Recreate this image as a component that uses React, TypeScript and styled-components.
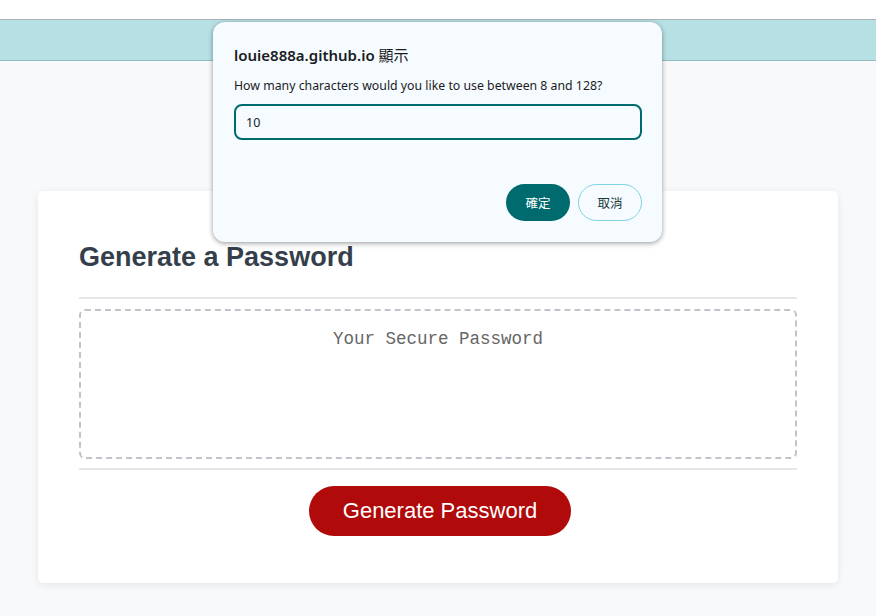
import React from "react";
import styled, { createGlobalStyle } from "styled-components";

const Global = createGlobalStyle`
  html, body { margin: 0; padding: 0; }
  body {
    background: #f8f9fb;
    font-family: "Liberation Sans", Arial, sans-serif;
    width: 876px;
    height: 616px;
    overflow: hidden;
  }
`;

const Page = styled.div`
  position: relative;
  width: 876px;
  height: 616px;
`;

const TopStrip = styled.div`
  height: 19px;
  background: #ffffff;
  border-bottom: 1px solid #a9b3b5;
`;

const Header = styled.header`
  height: 40px;
  background: #b7e0e4;
  border-bottom: 1px solid #97bcbf;
`;

const Main = styled.main`
  padding-top: 130px;
  display: flex;
  justify-content: center;
`;

const Card = styled.section`
  width: 800px;
  box-sizing: border-box;
  height: 392px;
  background: #ffffff;
  border-radius: 5px;
  box-shadow: 0 2px 8px rgba(0, 0, 0, 0.08);
  padding: 50px 41px 0;
  display: flex;
  flex-direction: column;
`;

const Title = styled.h2`
  margin: 0;
  font-family: "Liberation Sans", Arial, sans-serif;
  font-weight: 700;
  font-size: 27px;
  line-height: 33px;
  color: #353f4b;
  padding-bottom: 23px;
  border-bottom: 2px solid #e6e6e6;
`;

const PasswordBox = styled.div`
  margin-top: 10px;
  height: 150px;
  box-sizing: border-box;
  border: 2px dashed #c0c4ca;
  border-radius: 6px;
  display: flex;
  justify-content: center;
  padding-top: 17px;
  font-family: "Liberation Mono", "DejaVu Sans Mono", monospace;
  font-size: 17.5px;
  line-height: 22px;
  color: #666666;
`;

const Rule = styled.div`
  margin-top: 9px;
  height: 2px;
  background: #e6e6e6;
`;

const ButtonRow = styled.div`
  display: flex;
  justify-content: center;
  margin-top: 16px;
  padding-left: 4px;
`;

const GenerateButton = styled.button`
  width: 262px;
  height: 50px;
  border: none;
  border-radius: 25px;
  background: #b00a0a;
  color: #ffffff;
  font-family: "Liberation Sans", Arial, sans-serif;
  font-size: 22px;
  cursor: pointer;
`;

const Dialog = styled.div`
  position: absolute;
  left: 213px;
  top: 22px;
  width: 449px;
  height: 220px;
  box-sizing: border-box;
  background: #f5fbfe;
  border-radius: 12px;
  box-shadow: 0 1px 4px rgba(0, 0, 0, 0.3), 0 2px 6px rgba(0, 0, 0, 0.12);
  padding: 22px 20px 0 21px;
  display: flex;
  flex-direction: column;
  font-family: "Noto Sans", "Noto Sans CJK TC", sans-serif;
`;

const DialogTitle = styled.div`
  font-size: 15px;
  font-weight: 600;
  color: #1b1b1f;
  line-height: 22px;
`;

const Cjk = styled.span`
  font-family: "Noto Sans CJK TC", sans-serif;
  font-weight: 400;
`;

const DialogMessage = styled.div`
  margin-top: 11px;
  font-size: 12.3px;
  color: #1b1b1f;
  line-height: 18px;
`;

const PromptInput = styled.div`
  margin-top: 9px;
  height: 36px;
  box-sizing: border-box;
  border: 2px solid #006b6f;
  border-radius: 8px;
  padding: 0 10px;
  display: flex;
  align-items: center;
  font-size: 12.5px;
  color: #1b1b1f;
`;

const DialogButtons = styled.div`
  margin-top: 44px;
  display: flex;
  justify-content: flex-end;
  gap: 8px;
`;

const DialogButton = styled.button<{ $primary?: boolean }>`
  width: 64px;
  height: 37px;
  box-sizing: border-box;
  border-radius: 19px;
  font-family: "Noto Sans CJK TC", sans-serif;
  font-size: 12.5px;
  cursor: pointer;
  background: ${(p) => (p.$primary ? "#006b6f" : "transparent")};
  color: ${(p) => (p.$primary ? "#ffffff" : "#1b3a3c")};
  border: ${(p) => (p.$primary ? "none" : "1px solid #7fd3e0")};
`;

export default function App() {
  return (
    <Page>
      <Global />
      <TopStrip />
      <Header />
      <Main>
        <Card>
          <Title>Generate a Password</Title>
          <PasswordBox>Your Secure Password</PasswordBox>
          <Rule />
          <ButtonRow>
            <GenerateButton>Generate Password</GenerateButton>
          </ButtonRow>
        </Card>
      </Main>
      <Dialog>
        <DialogTitle>
          louie888a.github.io <Cjk>顯示</Cjk>
        </DialogTitle>
        <DialogMessage>How many characters would you like to use between 8 and 128?</DialogMessage>
        <PromptInput>10</PromptInput>
        <DialogButtons>
          <DialogButton $primary>確定</DialogButton>
          <DialogButton>取消</DialogButton>
        </DialogButtons>
      </Dialog>
    </Page>
  );
}
